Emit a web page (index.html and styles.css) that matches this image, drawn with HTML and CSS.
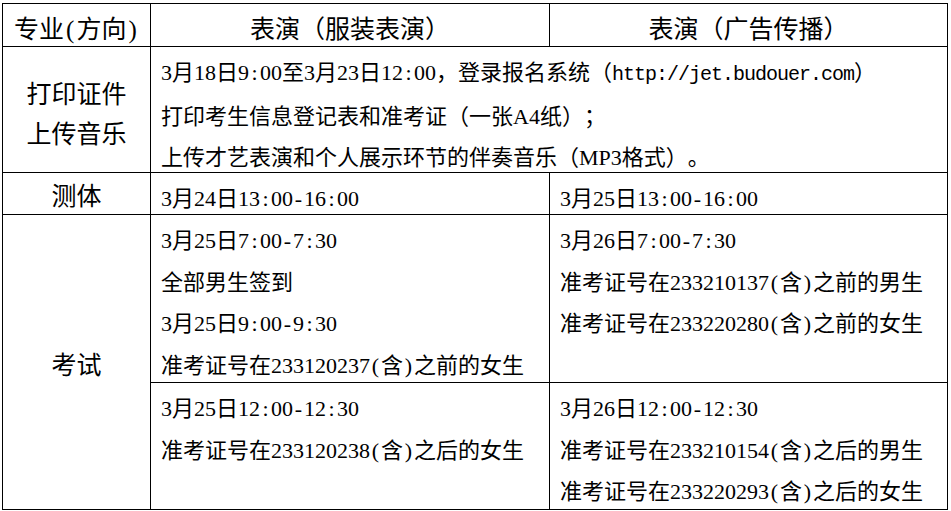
FILE: index.html
```html
<!DOCTYPE html>
<html lang="zh-CN">
<head>
<meta charset="utf-8">
<title>考试安排</title>
<link rel="stylesheet" href="styles.css">
</head>
<body>
<div class="sched">
  <div class="hd">专业<i class="h">(</i>方向<i class="h">)</i></div>
  <div class="hd">表演（服装表演）</div>
  <div class="hd">表演（广告传播）</div>

  <div class="lb lb-two">打印证件<br>上传音乐</div>
  <div class="tx wide">
    <p>3月18日9<i class="h">:</i>00至3月23日12<i class="h">:</i>00，登录报名系统（<span class="url">http://jet.budouer.com</span>）</p>
    <p>打印考生信息登记表和准考证（一张A4纸）；</p>
    <p>上传才艺表演和个人展示环节的伴奏音乐（MP3格式）。</p>
  </div>

  <div class="lb">测体</div>
  <div class="tx"><p>3月24日13<i class="h">:</i>00<i class="h">-</i>16<i class="h">:</i>00</p></div>
  <div class="tx"><p>3月25日13<i class="h">:</i>00<i class="h">-</i>16<i class="h">:</i>00</p></div>

  <div class="lb tall">考试</div>
  <div class="tx">
    <p>3月25日7<i class="h">:</i>00<i class="h">-</i>7<i class="h">:</i>30</p>
    <p>全部男生签到</p>
    <p>3月25日9<i class="h">:</i>00<i class="h">-</i>9<i class="h">:</i>30</p>
    <p>准考证号在233120237<i class="h">(</i>含<i class="h">)</i>之前的女生</p>
  </div>
  <div class="tx">
    <p>3月26日7<i class="h">:</i>00<i class="h">-</i>7<i class="h">:</i>30</p>
    <p>准考证号在233210137<i class="h">(</i>含<i class="h">)</i>之前的男生</p>
    <p>准考证号在233220280<i class="h">(</i>含<i class="h">)</i>之前的女生</p>
  </div>
  <div class="tx">
    <p>3月25日12<i class="h">:</i>00<i class="h">-</i>12<i class="h">:</i>30</p>
    <p>准考证号在233120238<i class="h">(</i>含<i class="h">)</i>之后的女生</p>
  </div>
  <div class="tx">
    <p>3月26日12<i class="h">:</i>00<i class="h">-</i>12<i class="h">:</i>30</p>
    <p>准考证号在233210154<i class="h">(</i>含<i class="h">)</i>之后的男生</p>
    <p>准考证号在233220293<i class="h">(</i>含<i class="h">)</i>之后的女生</p>
  </div>
</div>
</body>
</html>
```

FILE: styles.css
```css
html, body {
  margin: 0;
  padding: 0;
  background: #fff;
}

body {
  color: #000;
  font-family: "Liberation Serif", "Noto Sans CJK SC", serif;
  text-spacing-trim: space-all;
}

.sched {
  display: grid;
  grid-template-columns: 147px 398px 397px;
  grid-template-rows: 42px 125px 41px 167px 126px;
  gap: 1px;
  padding: 1px;
  background: #000;
  width: max-content;
  margin: 3px 0 0 2px;
}

.sched > div {
  background: #fff;
  overflow: visible;
}

.h {
  font-style: normal;
  display: inline-block;
  width: 0.5em;
  text-align: center;
}

.hd,
.lb {
  display: flex;
  align-items: center;
  justify-content: center;
  text-align: center;
  font-size: 25px;
  line-height: 40.5px;
  padding-top: 8px;
  box-sizing: border-box;
}

.hd {
  padding-top: 10px;
}

.lb-two {
  padding-top: 11px;
}

.tall {
  grid-row: 4 / span 2;
}

.wide {
  grid-column: 2 / span 2;
}

.tx {
  font-size: 22px;
  line-height: 41.7px;
  padding: 5px 0 0 10px;
  box-sizing: border-box;
  white-space: nowrap;
}

.tx p {
  margin: 0;
}

.url {
  font-family: "Liberation Mono", monospace;
  font-size: 20px;
  letter-spacing: -1px;
}
```
